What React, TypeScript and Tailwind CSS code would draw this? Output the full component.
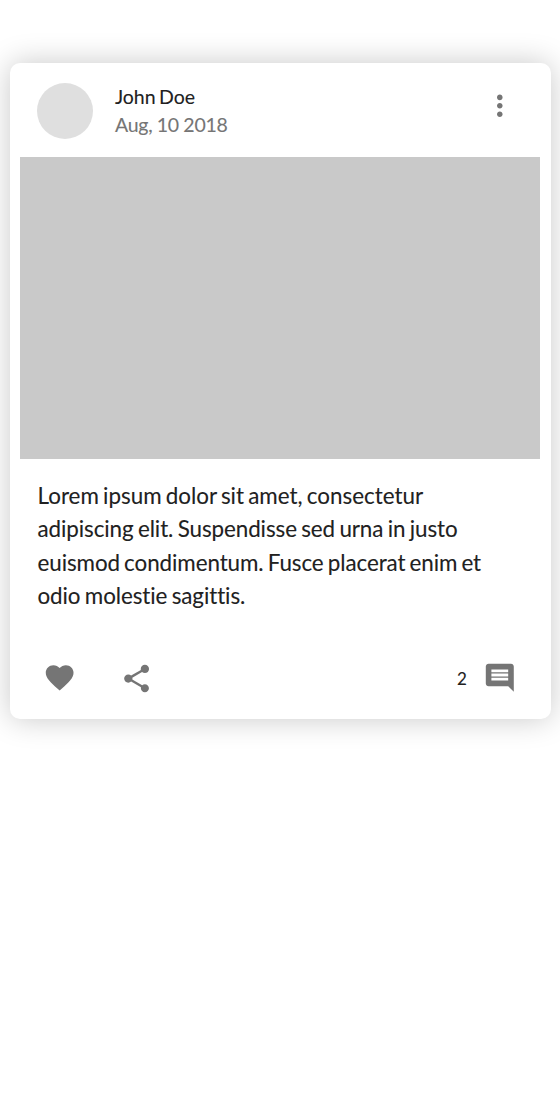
import { MdMoreVert, MdFavorite, MdShare, MdComment } from "react-icons/md";

export default function App() {
  return (
    <main className="h-[1120px] w-[560px] overflow-hidden bg-white pt-[63px] pl-[10px] font-['Lato',sans-serif] [font-variant-ligatures:none]">
      <article className="flex h-[656px] w-[541px] flex-col rounded-[10px] bg-white shadow-[0_0_30px_rgba(0,0,0,0.22)]">
        <header className="flex h-[94px] pt-5 pr-[34px] pl-[27px]">
          <div className="size-14 rounded-full bg-[#dfdfdf]" />
          <div className="ml-[22px] flex-1 text-[19.5px] leading-7 [-webkit-text-stroke:0.1px]">
            <p className="tracking-[-0.05px] text-[#212121] [word-spacing:-1.4px]">John Doe</p>
            <p className="tracking-[-0.28px] text-[#757575] [word-spacing:-0.2px]">Aug, 10 2018</p>
          </div>
          <button aria-label="More" className="mt-[5.5px] h-[34px] text-[#757575]">
            <MdMoreVert size={33.6} />
          </button>
        </header>
        <div className="mr-[11px] ml-[10px] h-[302px] bg-[#c9c9c9]" />
        <p className="mt-5 pl-[27.5px] text-[22.4px] leading-[33.4px] tracking-[-0.08px] whitespace-nowrap text-[#212121] [-webkit-text-stroke:0.1px]">
          <span className="tracking-normal [word-spacing:-1.5px]">Lorem ipsum dolor sit amet, consectetur</span>
          <br />
          <span className="[word-spacing:-1.3px]">adipiscing elit. Suspendisse sed urna in justo</span>
          <br />
          <span className="[word-spacing:-1.5px]">euismod condimentum. Fusce placerat enim et</span>
          <br />
          <span className="[word-spacing:-1.3px]">odio molestie sagittis.</span>
        </p>
        <footer className="mt-[48.5px] flex h-[34px] items-center pr-[34.5px] pl-[33px] text-[#757575]">
          <MdFavorite size={33.3} />
          <MdShare size={33.2} className="ml-[44px]" />
          <span className="mt-0.5 ml-auto text-[17px] text-[#212121] [-webkit-text-stroke:0.1px]">2</span>
          <MdComment size={33.6} className="ml-4" />
        </footer>
      </article>
    </main>
  );
}
